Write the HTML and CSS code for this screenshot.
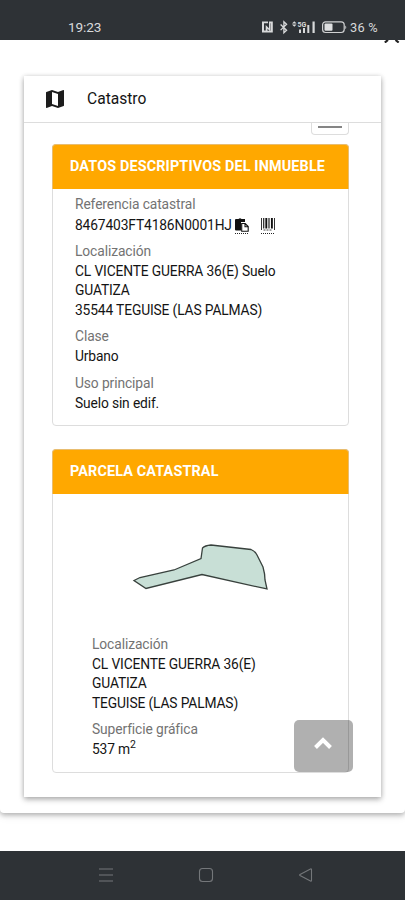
FILE: index.html
```html
<!DOCTYPE html>
<html lang="es">
<head>
<meta charset="utf-8">
<meta name="viewport" content="width=device-width, initial-scale=1">
<title>Catastro</title>
<link rel="stylesheet" href="styles.css">
</head>
<body>
<div class="statusbar">
  <span class="clock">19:23</span>
  <svg class="status-icons" width="86" height="16" viewBox="0 0 86 16">
    <path d="M1 2.500h6v1.800H3v7.200h1.700V6L8 9.300V2.500h3.800v11H5.500v-1.700h4.500V4.200H9.600v8.500L6.500 9.800v3.700H1z" fill="#d8d9da"/>
    <path d="M19.600 5.500l6 5.800-2.700 2.500V2.700l2.700 2.600-6 5.800" fill="none" stroke="#d8d9da" stroke-width="1.300"/>
    <path d="M31 4.600l2.300-2.400 2.300 2.400zM31 5.400h4.600l-2.300 2.300z" fill="#d8d9da"/>
    <text x="36.500" y="7.600" class="net">5G</text>
    <path d="M38 10.500h2V14h-2zM42 9h2v5h-2zM46.300 6h2v8h-2zM51.500 2.500h2.200V14h-2.200z" fill="#d8d9da"/>
    <rect x="61.600" y="2.800" width="21.600" height="10.700" rx="3" fill="none" stroke="#d0d1d2" stroke-width="1.200"/>
    <path d="M84.300 6.500c1.300.5 1.300 3.200 0 3.600z" fill="#d0d1d2"/>
    <rect x="63.500" y="4.600" width="8" height="7.200" rx="1" fill="#dedfe0"/>
  </svg>
  <span class="battery">36 %</span>
</div>
<main class="page">
  <svg class="clipped" width="16" height="3" viewBox="0 0 16 3"><path d="M.8 2.500L4 0M11.500 0l3.200 2.500" fill="none" stroke="#222" stroke-width="2.200"/></svg>
  <div class="sheet">
    <section class="card">
      <header class="card-head">
        <svg width="24" height="24" viewBox="0 0 24 24"><path fill="#1c1c1c" d="M20.500 3l-.16.03L15 5.100 9 3 3.360 4.900c-.21.07-.36.250-.36.480V20.500c0 .280.220.500.500.500l.160-.03L9 18.900l6 2.100 5.640-1.900c.210-.07.360-.250.360-.480V3.500c0-.280-.220-.500-.500-.500zM15 19l-6-2.110V5l6 2.110V19z"/></svg>
        <h1>Catastro</h1>
      </header>
      <div class="card-body">
        <div class="toggle"></div>
        <article class="panel">
          <h2>DATOS DESCRIPTIVOS DEL INMUEBLE</h2>
          <dl class="details">
            <dt>Referencia catastral</dt>
            <dd class="ref"><span>8467403FT4186N0001HJ</span>
              <svg class="copy" width="14" height="17" viewBox="0 0 14 17"><path d="M1 1h2.500q1.500-1.500 3 0H10v3H6v8.500H1q-1 0-1-1V2q0-1 1-1z" fill="#111"/><path d="M6.700 5.500h3.500l3 3v4.700H6.700zM10 5.700v3h3" fill="#fff" stroke="#111" stroke-width="1.100"/><path d="M0 15.500h14" stroke="#222" stroke-dasharray="1 1"/></svg>
              <svg class="barcode" width="14" height="17" viewBox="0 0 14 17"><path d="M.500 0v12M13.500 0v12" stroke="#333"/><path d="M2.700 0v10.500M8 0v10.500" stroke="#222" stroke-width="1.200"/><path d="M5.300 0v10.500M10.900 0v10.500" stroke="#111" stroke-width="1.900"/><path d="M2.500 12h9" stroke="#444" stroke-dasharray="2 1"/><path d="M0 15.500h14" stroke="#222" stroke-dasharray="1 1"/></svg>
            </dd>
            <dt>Localización</dt>
            <dd>CL VICENTE GUERRA 36(E) Suelo<br>GUATIZA<br>35544 TEGUISE (LAS PALMAS)</dd>
            <dt>Clase</dt>
            <dd>Urbano</dd>
            <dt>Uso principal</dt>
            <dd>Suelo sin edif.</dd>
          </dl>
        </article>
        <article class="panel parcel">
          <h2>PARCELA CATASTRAL</h2>
          <svg class="plot" width="160" height="70" viewBox="0 0 160 70"><path d="M14 50.500L20 47.500 54 40 81 28.500 82.500 18Q85 15.500 91 15L131 19.500Q135 21 137 25L143 37Q145 44 145 50L147 59 82 44.500 26 58.500z" fill="#c8dfd6" stroke="#38413d" stroke-width="1.300"/></svg>
          <dl class="details">
            <dt>Localización</dt>
            <dd>CL VICENTE GUERRA 36(E)<br>GUATIZA<br>TEGUISE (LAS PALMAS)</dd>
            <dt>Superficie gráfica</dt>
            <dd>537 m<sup>2</sup></dd>
          </dl>
        </article>
      </div>
    </section>
  </div>
  <button class="top" aria-label="Subir"><svg width="20" height="14" viewBox="0 0 20 14"><path d="M2.500 11.500L10 4l7.500 7.500" fill="none" stroke="#fff" stroke-width="4"/></svg></button>
</main>
<nav class="navbar">
  <svg width="16" height="16" viewBox="0 0 16 16"><path d="M1 2h14M1 8h14M1 14h14"/></svg>
  <svg width="16" height="16" viewBox="0 0 16 16"><rect x="1.500" y="1.500" width="13" height="13" rx="3"/></svg>
  <svg width="16" height="16" viewBox="0 0 16 16"><path d="M2 7.500L12.500 2q1-.5 1 .7v10.600q0 1.200-1 .7L2 8.500q-.8-.5 0-1z"/></svg>
</nav>
</body>
</html>
```
FILE: styles.css
```css
* { box-sizing: border-box; }
body {
  margin: 0;
  height: 900px;
  display: flex;
  flex-direction: column;
  overflow: hidden;
  background: #fff;
  color: #141414;
  font-family: Roboto, "Liberation Sans", sans-serif;
  font-size: 13.8px;
}
.statusbar {
  height: 40px;
  flex: none;
  display: flex;
  align-items: center;
  padding: 15px 26px 0 68px;
  background: #2e3236;
  color: #d8d9da;
}
.clock { flex: 1; margin-top: -2px; font-size: 13.6px; letter-spacing: -.1px; }
.status-icons { margin: -1px 3px 0 0; }
.net { font: bold 7px Roboto, sans-serif; fill: #d8d9da; }
.battery { width: 29px; font-size: 12.8px; letter-spacing: .25px; white-space: nowrap; }
.page { position: relative; height: 811px; flex: none; overflow: hidden; }
.clipped { position: absolute; left: 384px; top: 0; z-index: 1; }
.sheet {
  height: 773px;
  padding: 36px 24px 0;
  border-radius: 0 0 4px 4px;
  box-shadow: 0 2px 5px rgba(0, 0, 0, .28), 0 4px 10px rgba(0, 0, 0, .06);
}
.card {
  height: 721px;
  background: #fff;
  box-shadow: 0 1px 5px rgba(0, 0, 0, .24), 0 3px 6px rgba(0, 0, 0, .18);
}
.card-head {
  height: 47px;
  display: flex;
  align-items: center;
  gap: 20px;
  padding-left: 19px;
  border-bottom: 1px solid #ddd;
}
h1 { margin: 0; font-size: 15.6px; font-weight: 400; }
.card-body { padding: 0 32px 0 28px; }
.toggle {
  width: 38px;
  height: 12px;
  margin-left: auto;
  border: 1px solid #ddd;
  border-top: 0;
  border-radius: 0 0 4px 4px;
  display: flex;
  justify-content: center;
  padding-top: 3px;
}
.toggle::before { content: ""; width: 24px; height: 2px; background: #858585; }
.panel {
  width: 297px;
  height: 282px;
  margin: 9px 0 23px;
  border: 1px solid #ddd;
  border-radius: 4px;
}
.parcel { height: 324px; margin-bottom: 0; }
h2 {
  height: 45px;
  margin: -1px -1px 0;
  padding: 0 0 1px 17px;
  display: flex;
  align-items: center;
  border: 1px solid #e8bd70;
  border-bottom: 0;
  border-radius: 4px 4px 0 0;
  background: #ffa800;
  color: #fff;
  font-size: 14.4px;
  font-weight: 700;
  letter-spacing: .14px;
  white-space: nowrap;
}
.details { margin: 5px 0 0 22px; letter-spacing: -.14px; white-space: nowrap; }
.details dt { line-height: 21px; color: #737373; letter-spacing: -.1px; }
.details dd { margin: 0 0 6px; line-height: 19.4px; }
.details .ref { display: flex; height: 20px; line-height: 20.5px; }
.copy { margin: 3px 0 0 3px; }
.barcode { margin: 3px 0 0 12px; }
.plot { display: block; margin: 36px 0 0 67px; }
.parcel .details { margin: 34px 0 0 39px; }
sup { font-size: 10.5px; line-height: 0; }
.top {
  position: absolute;
  left: 294px;
  top: 680px;
  width: 59px;
  height: 52px;
  padding: 0;
  border: 0;
  border-radius: 5px;
  background: rgba(0, 0, 0, .31);
  display: grid;
  place-items: center;
}
.top svg { margin: -6px 2px 0 0; }
.navbar {
  height: 49px;
  flex: none;
  display: flex;
  justify-content: space-between;
  padding: 16px 91px 0 98px;
  background: #2e3236;
}
.navbar svg { fill: none; stroke: #74777a; stroke-width: 1.1; }
```
